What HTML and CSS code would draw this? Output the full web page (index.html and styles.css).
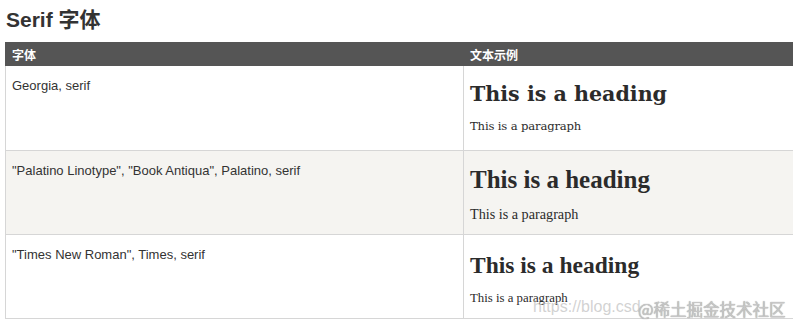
FILE: index.html
```html
<!DOCTYPE html>
<html lang="zh">
<head>
<meta charset="utf-8">
<title>Serif 字体</title>
<link rel="stylesheet" href="styles.css">
</head>
<body>
<div class="page">
  <h1 class="title">Serif 字体</h1>
  <table class="fonts">
    <thead>
      <tr>
        <th>字体</th>
        <th>文本示例</th>
      </tr>
    </thead>
    <tbody>
      <tr class="row row-georgia">
        <td class="name">Georgia, serif</td>
        <td class="sample">
          <h2>This is a heading</h2>
          <p>This is a paragraph</p>
        </td>
      </tr>
      <tr class="row row-palatino alt">
        <td class="name">"Palatino Linotype", "Book Antiqua", Palatino, serif</td>
        <td class="sample">
          <h2>This is a heading</h2>
          <p>This is a paragraph</p>
        </td>
      </tr>
      <tr class="row row-times">
        <td class="name">"Times New Roman", Times, serif</td>
        <td class="sample">
          <h2>This is a heading</h2>
          <p>This is a paragraph</p>
        </td>
      </tr>
    </tbody>
  </table>
  <span class="wm-url">https://blog.csd</span>
  <span class="wm-brand">@稀土掘金技术社区</span>
</div>
</body>
</html>
```

FILE: styles.css
```css
html, body {
  margin: 0;
  padding: 0;
  background: #ffffff;
}

body {
  overflow: hidden;
  font-family: "Liberation Sans", Arial, "Noto Sans CJK SC", sans-serif;
  color: #333333;
}

.page {
  position: relative;
  width: 793px;
  height: 325px;
  overflow: hidden;
  padding: 8px 0 0 5px;
  box-sizing: border-box;
}

.title {
  margin: 0 0 10px 1px;
  font-size: 21px;
  line-height: 24px;
  font-weight: bold;
  color: #333333;
  font-family: "Liberation Sans", Arial, "Noto Sans CJK SC", sans-serif;
}

.fonts {
  width: 917px;
  border-collapse: collapse;
  table-layout: fixed;
}

.fonts th {
  height: 24px;
  padding: 0 6px;
  background: #555555;
  color: #ffffff;
  font-size: 12px;
  font-weight: bold;
  text-align: left;
  font-family: "Liberation Sans", Arial, "Noto Sans CJK SC", sans-serif;
  border-left: 1px solid #555555;
}

.fonts td {
  border: 1px solid #d6d6d6;
  padding: 10px 6px;
  vertical-align: top;
}

.fonts thead + tbody tr:first-child td {
  border-top: none;
}

.row {
  height: 84px;
}

.row + .row {
  height: 83px;
}

.row-times {
  height: 85px;
}

.alt td {
  background: #f5f4f1;
}

.name {
  font-size: 13px;
  line-height: 19.5px;
  color: #333333;
  font-family: "Liberation Sans", Arial, sans-serif;
}

.sample h2,
.sample p {
  margin: 0;
  color: #2b2b2b;
}

.sample h2 {
  font-weight: bold;
}

.row-georgia .sample h2 {
  font-family: "DejaVu Serif", Georgia, serif;
  font-size: 20.6px;
  line-height: 1.2;
  margin: 6px 0 11px;
}

.row-georgia .sample p {
  font-family: "DejaVu Serif", Georgia, serif;
  font-size: 11.6px;
  line-height: 1.5;
  letter-spacing: -0.15px;
}

.row-palatino .sample h2 {
  font-family: "Liberation Serif", "Palatino Linotype", serif;
  font-size: 25px;
  line-height: 30px;
  margin: 4px 0 9px;
}

.row-palatino .sample p {
  font-family: "Liberation Serif", "Palatino Linotype", serif;
  font-size: 14.2px;
  line-height: 20px;
}

.row-times .sample h2 {
  font-family: "Liberation Serif", "Times New Roman", serif;
  font-size: 23.5px;
  line-height: 1.2;
  margin: 6px 0 10px;
}

.row-times .sample p {
  font-family: "Liberation Serif", "Times New Roman", serif;
  font-size: 12.8px;
  line-height: 1.5;
}

.wm-url {
  position: absolute;
  left: 533px;
  top: 297px;
  font-family: "Liberation Sans", Arial, sans-serif;
  font-size: 16px;
  line-height: 20px;
  color: rgba(190, 190, 190, 0.7);
  white-space: nowrap;
  pointer-events: none;
}

.wm-brand {
  position: absolute;
  left: 638px;
  top: 297px;
  font-family: "Noto Sans CJK SC", sans-serif;
  font-size: 16.5px;
  line-height: 24px;
  color: #c6c6c6;
  text-shadow: 0 0 1px #8a8a8a;
  white-space: nowrap;
  pointer-events: none;
}
```
